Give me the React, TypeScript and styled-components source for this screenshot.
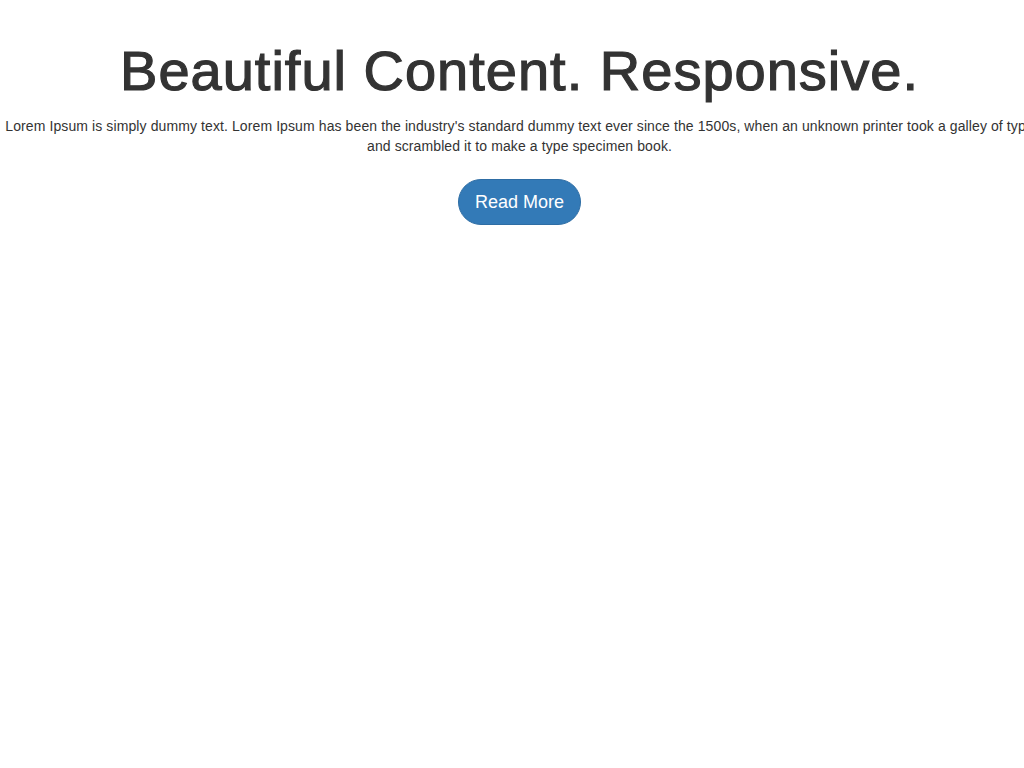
import React from "react";
import styled, { createGlobalStyle } from "styled-components";

const Global = createGlobalStyle`
  html, body { margin: 0; padding: 0; background: #fff; overflow: hidden; }
  body { font-family: "Liberation Sans", Arial, sans-serif; color: #333; }
`;

const Viewport = styled.div`
  width: 100%;
  overflow: hidden;
`;

const Hero = styled.section`
  width: 1039px;
  padding-top: 40px;
  text-align: center;
`;

const Title = styled.h1`
  margin: 0;
  font-family: "Liberation Sans", Arial, sans-serif;
  font-size: 56px;
  line-height: 1.1;
  font-weight: 400;
  letter-spacing: 1px;
  -webkit-text-stroke: 1.2px #333;
  color: #333;
`;

const Lead = styled.p`
  margin: 14px 0 0;
  font-size: 14px;
  line-height: 20px;
  letter-spacing: 0.1px;
  color: #333;
`;

const Button = styled.a`
  display: inline-block;
  margin-top: 23px;
  padding: 10px 16px;
  font-size: 18px;
  line-height: 24px;
  color: #fff;
  background: #337ab7;
  border: 1px solid #2e6da4;
  border-radius: 24px;
  text-decoration: none;
`;

export default function App() {
  return (
    <Viewport>
      <Global />
      <Hero>
        <Title>Beautiful Content. Responsive.</Title>
        <Lead>
          Lorem Ipsum is simply dummy text. Lorem Ipsum has been the industry's standard dummy text ever since the 1500s, when an unknown printer took a galley of type and scrambled it to make a type specimen book.
        </Lead>
        <Button href="#">Read More</Button>
      </Hero>
    </Viewport>
  );
}
